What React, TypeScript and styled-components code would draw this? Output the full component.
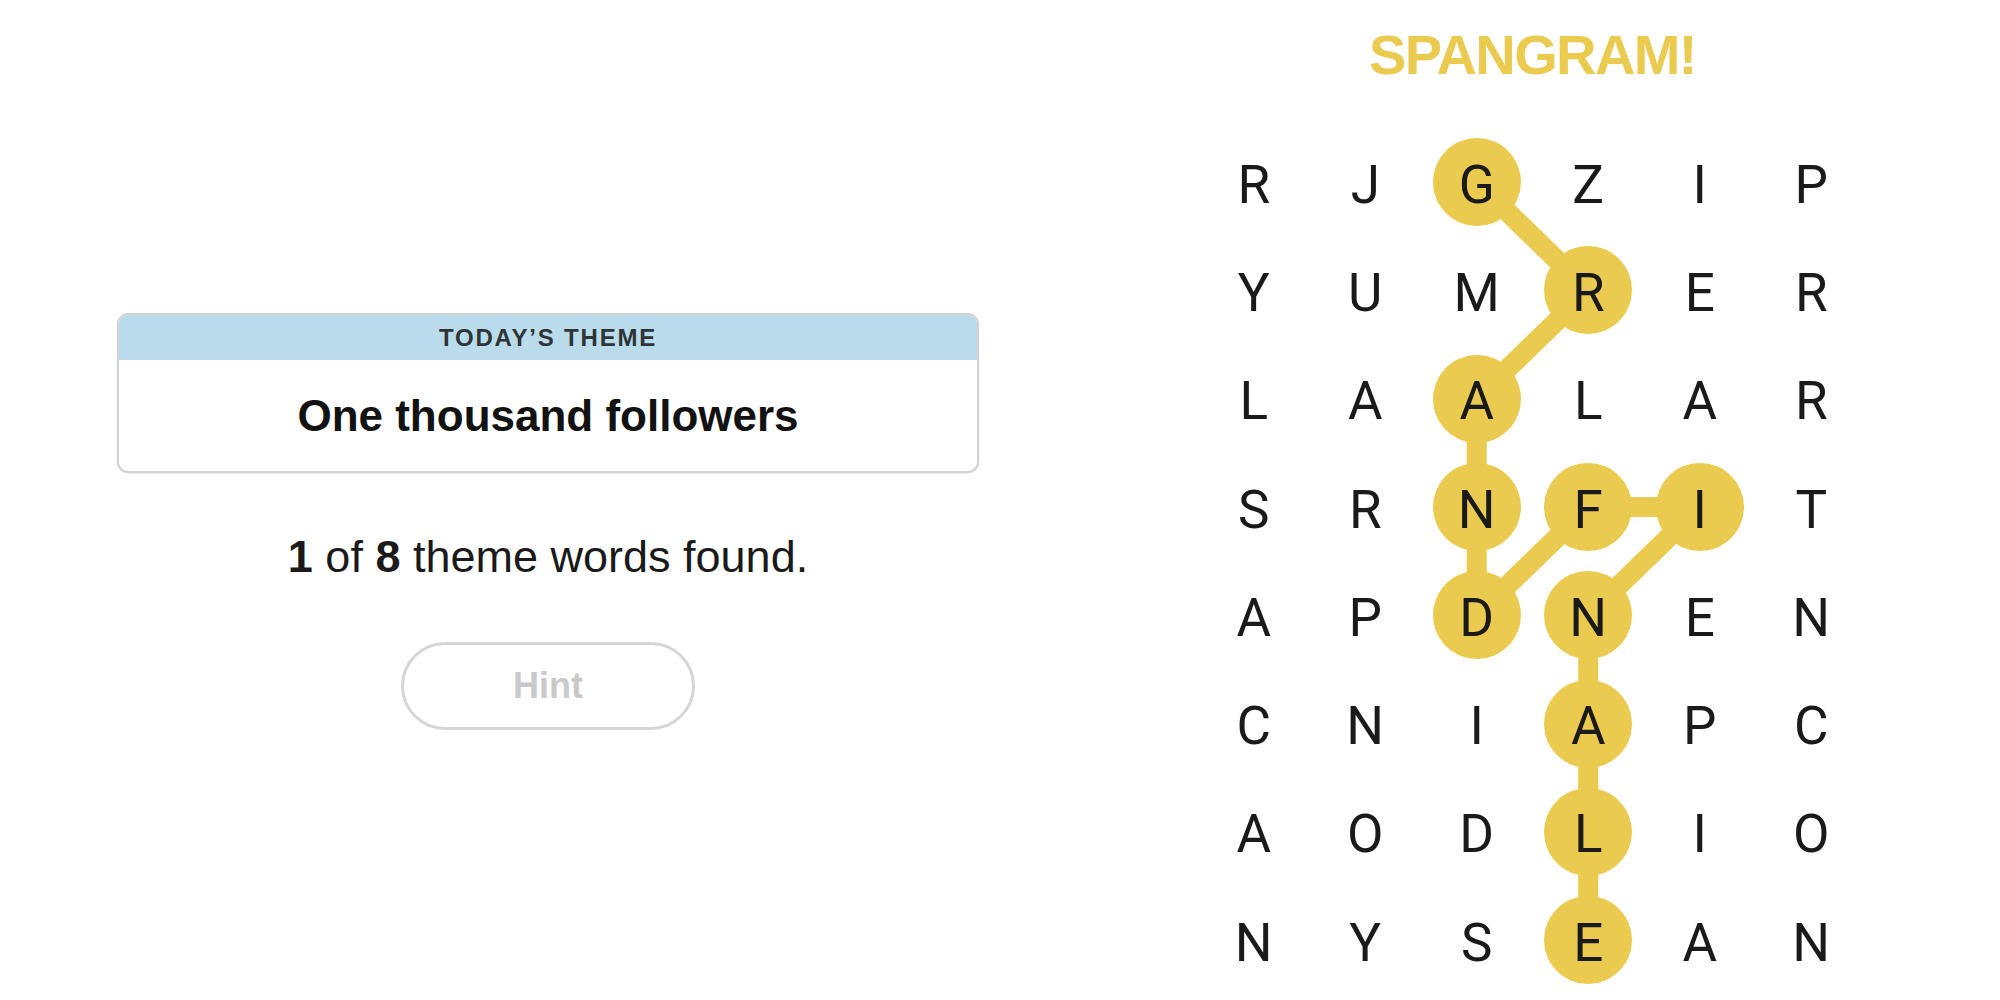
import React from "react";
import styled, { createGlobalStyle } from "styled-components";

const GlobalStyle = createGlobalStyle`
  html, body { margin: 0; padding: 0; background: #ffffff; }
  body { font-family: "Liberation Sans", Arial, sans-serif; color: #121212; }
`;

const YELLOW = "#ebcb4f";
const CELL_W = 111.5;
const CELL_H = 108.3;

const letters = [
  "RJGZIP",
  "YUMRER",
  "LAALAR",
  "SRNFIT",
  "APDNEN",
  "CNIAPC",
  "AODLIO",
  "NYSEAN",
];

const path: [number, number][] = [
  [0, 2], [1, 3], [2, 2], [3, 2], [4, 2], [3, 3], [3, 4], [4, 3], [5, 3], [6, 3], [7, 3],
];

const Page = styled.main`
  display: flex;
  width: 2000px;
  height: 1000px;
  box-sizing: border-box;
  padding-left: 117px;
`;

const LeftPanel = styled.section`
  width: 862px;
  padding-top: 313px;
  display: flex;
  flex-direction: column;
  align-items: center;
`;

const ThemeCard = styled.div`
  width: 100%;
  height: 160px;
  box-sizing: border-box;
  border: 2px solid #d3d3d3;
  border-radius: 11px;
  overflow: hidden;
  display: flex;
  flex-direction: column;
  box-shadow: 0 1px 2px rgba(0, 0, 0, 0.08);
`;

const ThemeHeader = styled.div`
  height: 45px;
  background: #badcea;
  display: flex;
  align-items: center;
  justify-content: center;
  font-family: "Liberation Sans", Arial, sans-serif;
  font-weight: 700;
  font-size: 24px;
  letter-spacing: 1.8px;
  color: #2e3438;
`;

const ThemeBody = styled.div`
  flex: 1;
  display: flex;
  align-items: center;
  justify-content: center;
  font-family: "Liberation Sans", Arial, sans-serif;
  font-weight: 700;
  font-size: 44px;
  color: #121212;
`;

const Status = styled.p`
  margin: 59px 0 0;
  height: 50px;
  line-height: 50px;
  font-family: "Liberation Sans", Arial, sans-serif;
  font-size: 45px;
  color: #1a1a1a;
  b { font-weight: 700; }
`;

const HintButton = styled.button`
  margin-top: 60px;
  width: 294px;
  height: 88px;
  box-sizing: border-box;
  border: 3px solid #d5d5d5;
  border-radius: 44px;
  background: #ffffff;
  font-family: "Liberation Sans", Arial, sans-serif;
  font-weight: 700;
  font-size: 36px;
  color: #c9c9c9;
  padding: 0;
`;

const RightPanel = styled.section`
  margin-left: 219px;
  width: ${6 * CELL_W}px;
  padding-top: 25px;
  display: flex;
  flex-direction: column;
  align-items: center;
`;

const Spangram = styled.h2`
  margin: 0;
  height: 60px;
  line-height: 60px;
  font-family: "Liberation Sans", Arial, sans-serif;
  font-weight: 700;
  font-size: 56px;
  letter-spacing: -1.6px;
  color: ${YELLOW};
`;

const Board = styled.div`
  position: relative;
  margin-top: 43px;
  width: ${6 * CELL_W}px;
  height: ${8 * CELL_H}px;
`;

const PathLayer = styled.svg`
  position: absolute;
  left: 0;
  top: 0;
  width: 100%;
  height: 100%;
`;

const LetterGrid = styled.div`
  position: relative;
  display: grid;
  grid-template-columns: repeat(6, ${CELL_W}px);
  grid-template-rows: repeat(8, ${CELL_H}px);
`;

const Cell = styled.div`
  display: flex;
  align-items: center;
  justify-content: center;
`;

const Letter = styled.span<{ $on: boolean }>`
  width: 88px;
  height: 88px;
  box-sizing: border-box;
  padding-top: 5px;
  border-radius: 50%;
  display: flex;
  align-items: center;
  justify-content: center;
  background: ${(p) => (p.$on ? YELLOW : "transparent")};
  font-family: Roboto, "Liberation Sans", sans-serif;
  font-weight: 400;
  font-size: 53px;
  color: #1a1a1a;
`;

const isOn = (r: number, c: number) => path.some(([pr, pc]) => pr === r && pc === c);

export default function App() {
  const pts = path
    .map(([r, c]) => `${(c + 0.5) * CELL_W},${(r + 0.5) * CELL_H}`)
    .join(" ");
  return (
    <>
      <GlobalStyle />
      <Page>
        <LeftPanel>
          <ThemeCard>
            <ThemeHeader>TODAY’S THEME</ThemeHeader>
            <ThemeBody>One thousand followers</ThemeBody>
          </ThemeCard>
          <Status>
            <b>1</b> of <b>8</b> theme words found.
          </Status>
          <HintButton>Hint</HintButton>
        </LeftPanel>
        <RightPanel>
          <Spangram>SPANGRAM!</Spangram>
          <Board>
            <PathLayer viewBox={`0 0 ${6 * CELL_W} ${8 * CELL_H}`}>
              <polyline
                points={pts}
                fill="none"
                stroke={YELLOW}
                strokeWidth={20}
                strokeLinejoin="round"
                strokeLinecap="round"
              />
            </PathLayer>
            <LetterGrid>
              {letters.map((row, r) =>
                row.split("").map((ch, c) => (
                  <Cell key={`${r}-${c}`}>
                    <Letter $on={isOn(r, c)}>{ch}</Letter>
                  </Cell>
                ))
              )}
            </LetterGrid>
          </Board>
        </RightPanel>
      </Page>
    </>
  );
}
